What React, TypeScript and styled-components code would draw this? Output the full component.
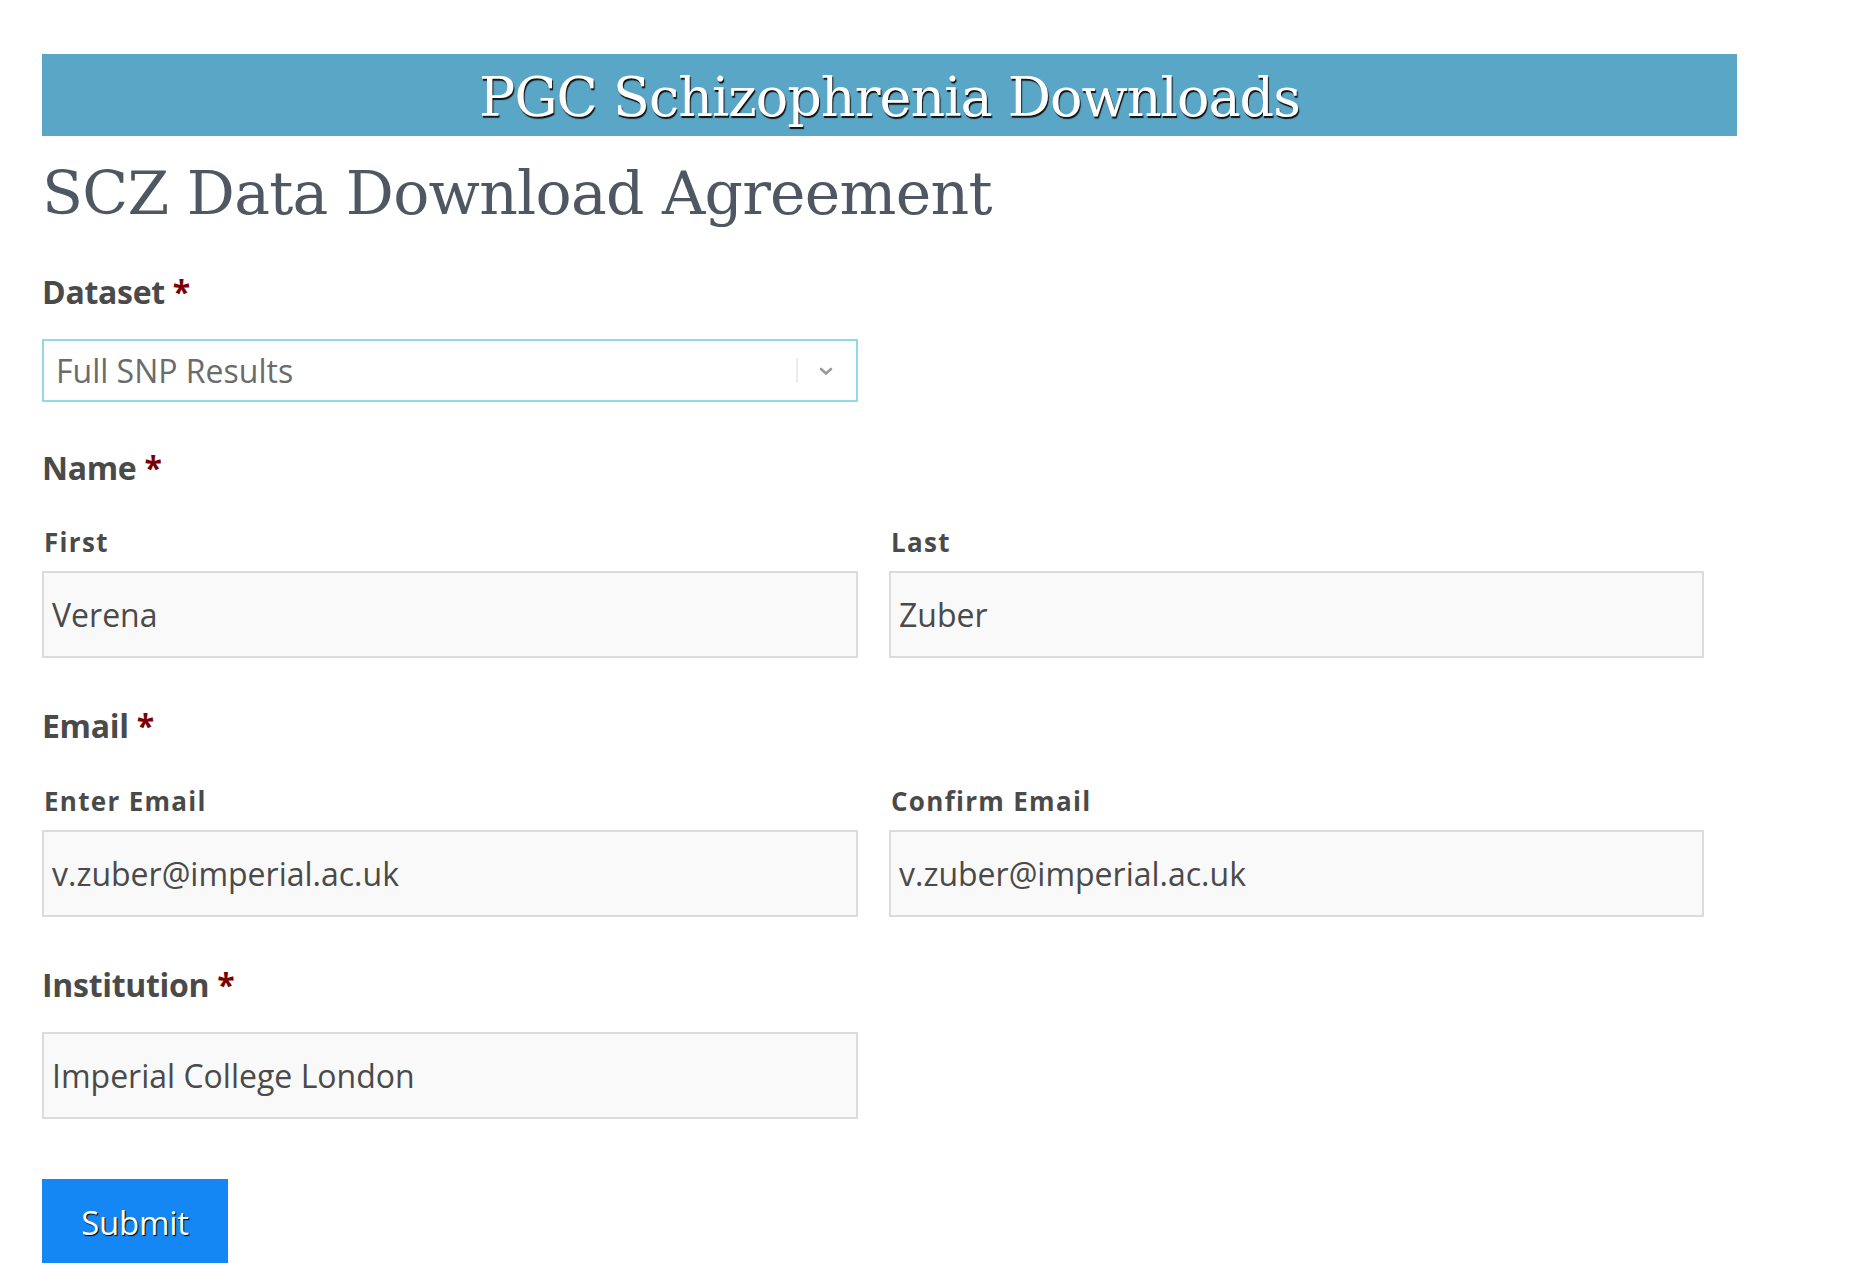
import React from "react";
import styled, { createGlobalStyle } from "styled-components";

const Global = createGlobalStyle`
  html, body { margin: 0; padding: 0; background: #ffffff; }
  body { font-family: "Open Sans", "Liberation Sans", sans-serif; }
`;

const Page = styled.div`
  padding: 54px 0 60px 42px;
`;

const Banner = styled.div`
  width: 1695px;
  height: 82px;
  background: #5aa6c6;
  display: flex;
  align-items: center;
  justify-content: center;
`;

const BannerTitle = styled.h2`
  margin: 0;
  padding-top: 4px;
  font-family: "DejaVu Serif", "Liberation Serif", serif;
  font-weight: 400;
  font-size: 54px;
  letter-spacing: -1px;
  color: #ffffff;
  text-shadow: 1px 2px 1px #111;
`;

const Heading = styled.h1`
  margin: 19px 0 0 0;
  font-family: "DejaVu Serif", "Liberation Serif", serif;
  font-weight: 400;
  font-size: 60px;
  line-height: 77px;
  letter-spacing: -0.75px;
  color: #4f5862;
`;

const Form = styled.form`
  display: flex;
  flex-direction: column;
  margin-top: 40px;
`;

const Field = styled.div<{ $gap: number }>`
  display: flex;
  flex-direction: column;
  margin-bottom: ${(p) => p.$gap}px;
`;

const Label = styled.label<{ $after: number }>`
  font-weight: 700;
  font-size: 32px;
  line-height: 40px;
  letter-spacing: -0.3px;
  color: #4a4a4a;
  margin-bottom: ${(p) => p.$after}px;
`;

const Star = styled.span`
  color: #7a0000;
  margin-left: 8px;
`;

const Pair = styled.div`
  display: grid;
  grid-template-columns: 816px 815px;
  column-gap: 31px;
`;

const Sub = styled.div`
  display: flex;
  flex-direction: column;
`;

const SubLabel = styled.span`
  font-weight: 700;
  font-size: 26px;
  line-height: 34px;
  letter-spacing: 1.3px;
  color: #4a4a4a;
  margin-bottom: 12px;
  padding-left: 2px;
`;

const Input = styled.div<{ $width?: number }>`
  box-sizing: border-box;
  width: ${(p) => (p.$width ? `${p.$width}px` : "100%")};
  height: 87px;
  border: 2px solid #dcdcdc;
  background: #f9f9f9;
  display: flex;
  align-items: center;
  padding: 0 8px;
  font-size: 32px;
  color: #4a4a4a;
`;

const Select = styled.div`
  box-sizing: border-box;
  width: 816px;
  height: 63px;
  border: 2px solid #8fdae4;
  background: #ffffff;
  display: flex;
  align-items: center;
  padding: 0 0 0 12px;
  font-size: 32px;
  color: #6b6b6b;
`;

const SelectValue = styled.span`
  flex: 1;
`;

const Divider = styled.span`
  width: 2px;
  height: 25px;
  background: #ececec;
  margin-right: 20px;
`;

const Chevron = styled.svg`
  width: 16px;
  height: 10px;
  margin-right: 22px;
`;

const Submit = styled.button`
  align-self: flex-start;
  margin-top: 13px;
  width: 186px;
  height: 84px;
  border: none;
  background: #1487f5;
  color: #ffffff;
  font-family: "Open Sans", "Liberation Sans", sans-serif;
  font-size: 33px;
  letter-spacing: -0.3px;
  text-shadow: 1px 1px 1px #000;
  padding: 2px 0 0 0;
`;

export default function App() {
  return (
    <>
      <Global />
      <Page>
        <Banner>
          <BannerTitle>PGC Schizophrenia Downloads</BannerTitle>
        </Banner>
        <Heading>SCZ Data Download Agreement</Heading>
        <Form onSubmit={(e) => e.preventDefault()}>
          <Field $gap={46}>
            <Label $after={27}>
              Dataset<Star>*</Star>
            </Label>
            <Select>
              <SelectValue>Full SNP Results</SelectValue>
              <Divider />
              <Chevron viewBox="0 0 16 10">
                <polyline
                  points="3,3 8,7.5 13,3"
                  fill="none"
                  stroke="#9a9a9a"
                  strokeWidth="2.6"
                  strokeLinecap="round"
                  strokeLinejoin="round"
                />
              </Chevron>
            </Select>
          </Field>
          <Field $gap={48}>
            <Label $after={37}>
              Name<Star>*</Star>
            </Label>
            <Pair>
              <Sub>
                <SubLabel>First</SubLabel>
                <Input>Verena</Input>
              </Sub>
              <Sub>
                <SubLabel>Last</SubLabel>
                <Input>Zuber</Input>
              </Sub>
            </Pair>
          </Field>
          <Field $gap={48}>
            <Label $after={38}>
              Email<Star>*</Star>
            </Label>
            <Pair>
              <Sub>
                <SubLabel>Enter Email</SubLabel>
                <Input>v.zuber@imperial.ac.uk</Input>
              </Sub>
              <Sub>
                <SubLabel>Confirm Email</SubLabel>
                <Input>v.zuber@imperial.ac.uk</Input>
              </Sub>
            </Pair>
          </Field>
          <Field $gap={47}>
            <Label $after={27}>
              Institution<Star>*</Star>
            </Label>
            <Input $width={816}>Imperial College London</Input>
          </Field>
          <Submit type="submit">Submit</Submit>
        </Form>
      </Page>
    </>
  );
}
